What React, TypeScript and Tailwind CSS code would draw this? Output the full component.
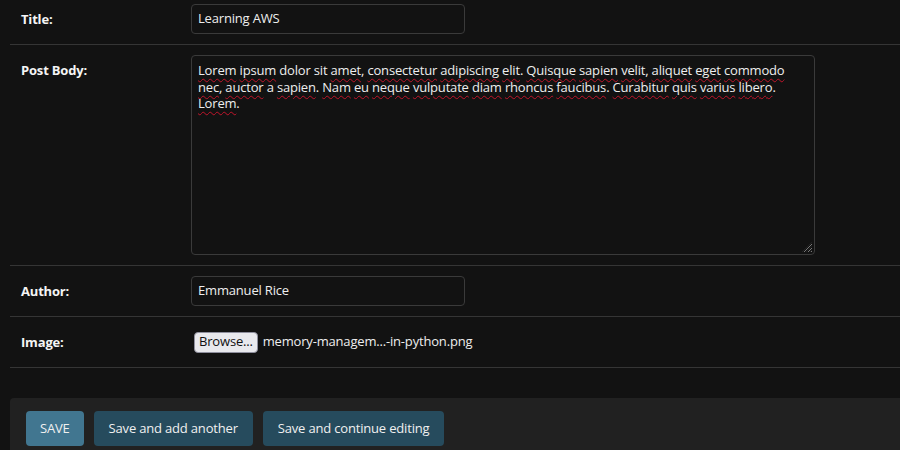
import type { ReactNode } from 'react'

const font = { fontFamily: '"Open Sans", "Noto Sans", "Liberation Sans", sans-serif', letterSpacing: '-0.18px' }

function Typo({ children }: { children: ReactNode }) {
  return <span className="underline decoration-wavy decoration-[#c0142a] decoration-1 underline-offset-[3px]">{children}</span>
}

function Row({ label, children, first = false }: { label: string; children: ReactNode; first?: boolean }) {
  return (
    <div className={`flex items-start border-b border-[#353535] pl-[11px] pr-[10px] py-[10px] ${first ? '-mt-[6px]' : ''}`}>
      <label className="w-[170px] shrink-0 text-[13px] font-bold leading-[30px] text-[#f5f5f5]">{label}</label>
      <div className="flex-1">{children}</div>
    </div>
  )
}

function TextInput({ value }: { value: string }) {
  return (
    <div className="flex h-[30px] w-[274px] items-center rounded-[4px] border border-[#3a3a3a] bg-[#121212] px-[6px] text-[13px] text-[#eeeeee]">
      {value}
    </div>
  )
}

function ResizeGrip() {
  return (
    <svg className="absolute bottom-[1px] right-[1px]" width="12" height="12" viewBox="0 0 12 12">
      <path d="M11 3 L3 11 M11 7 L7 11 M11 10 L10 11" stroke="#777" strokeWidth="1" />
      <path d="M11 1 L1 11 M11 5 L5 11 M11 9 L9 11" stroke="#222" strokeWidth="1" />
    </svg>
  )
}

function PostBody() {
  return (
    <div className="relative h-[200px] w-[624px] rounded-[4px] border border-[#3a3a3a] bg-[#121212] px-[6px] py-[6px] text-[13px] leading-[16.5px] whitespace-nowrap text-[#eeeeee]">
      <Typo>Lorem</Typo> <Typo>ipsum</Typo> dolor sit <Typo>amet</Typo>, <Typo>consectetur</Typo> <Typo>adipiscing</Typo> <Typo>elit</Typo>. <Typo>Quisque</Typo> <Typo>sapien</Typo> <Typo>velit</Typo>, <Typo>aliquet</Typo> <Typo>eget</Typo> <Typo>commodo</Typo>
      <br />
      <Typo>nec</Typo>, <Typo>auctor</Typo> a <Typo>sapien</Typo>. <Typo>Nam</Typo> <Typo>eu</Typo> <Typo>neque</Typo> <Typo>vulputate</Typo> <Typo>diam</Typo> <Typo>rhoncus</Typo> <Typo>faucibus</Typo>. <Typo>Curabitur</Typo> <Typo>quis</Typo> <Typo>varius</Typo> <Typo>libero</Typo>.
      <br />
      <Typo>Lorem</Typo>.
      <ResizeGrip />
    </div>
  )
}

function FileInput() {
  return (
    <div className="flex h-[30px] items-center gap-[5px] pl-[3px] text-[13px] text-[#eeeeee]">
      <span className="flex h-[21px] items-center rounded-[4px] border border-[#8f8f9d] bg-[#e9e9ed] px-[4px] text-[13px] text-[#111]">Browse...</span>
      <span>memory-managem...-in-python.png</span>
    </div>
  )
}

export default function App() {
  return (
    <div className="h-[450px] w-[900px] overflow-hidden bg-[#121212]" style={font}>
      <div className="pl-[10px]">
        <Row label="Title:" first>
          <TextInput value="Learning AWS" />
        </Row>
        <Row label="Post Body:">
          <PostBody />
        </Row>
        <Row label="Author:">
          <TextInput value="Emmanuel Rice" />
        </Row>
        <Row label="Image:">
          <FileInput />
        </Row>
        <div className="mt-[30px] flex gap-[10px] rounded-l-[4px] bg-[#212121] px-[16px] pt-[13px] pb-[12px]">
          <button className="h-[35px] rounded-[4px] bg-[#417690] px-[14px] text-[13px] text-[#f0f0f0]">SAVE</button>
          <button className="h-[35px] rounded-[4px] bg-[#264b5d] px-[15px] text-[13px] text-[#f0f0f0]">Save and add another</button>
          <button className="h-[35px] rounded-[4px] bg-[#264b5d] px-[15px] text-[13px] text-[#f0f0f0]">Save and continue editing</button>
        </div>
      </div>
    </div>
  )
}
